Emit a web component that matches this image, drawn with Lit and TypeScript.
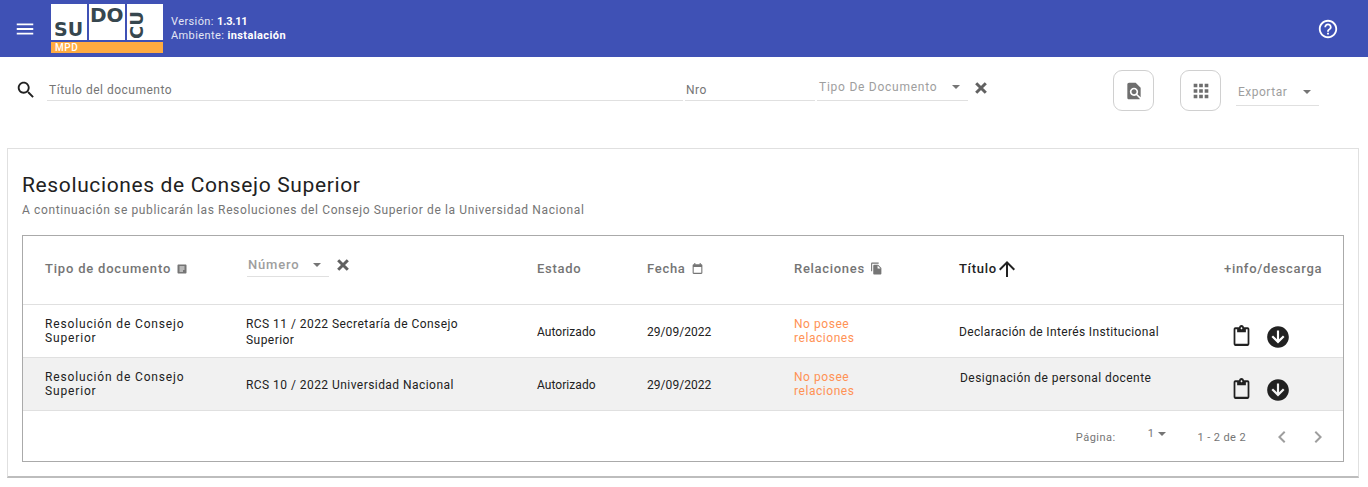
import { LitElement, html, css, svg } from "lit";
import { customElement } from "lit/decorators.js";

const icon = (size: number, d: string, cls = "") =>
  html`<svg class=${cls} width=${size} height=${size} viewBox="0 0 24 24" fill="currentColor">${svg`<path d=${d}></path>`}</svg>`;

const timesIcon = (cls: string) =>
  html`<svg class=${cls} width="16" height="16" viewBox="0 0 16 16" fill="none" stroke="currentColor" stroke-width="3">${svg`<path d="M3.2 3.2L12.8 12.8M12.8 3.2L3.2 12.8"></path>`}</svg>`;

const P = {
  menu: "M3 18h18v-2H3v2zm0-5h18v-2H3v2zm0-7v2h18V6H3z",
  help: "M11 18h2v-2h-2v2zm1-16C6.48 2 2 6.48 2 12s4.48 10 10 10 10-4.48 10-10S17.52 2 12 2zm0 18c-4.41 0-8-3.59-8-8s3.59-8 8-8 8 3.59 8 8-3.59 8-8 8zm0-14c-2.21 0-4 1.79-4 4h2c0-1.1.9-2 2-2s2 .9 2 2c0 2-3 1.75-3 5h2c0-2.25 3-2.5 3-5 0-2.21-1.79-4-4-4z",
  search: "M15.5 14h-.79l-.28-.27C15.41 12.59 16 11.11 16 9.5 16 5.91 13.09 3 9.5 3S3 5.91 3 9.5 5.91 16 9.5 16c1.61 0 3.09-.59 4.23-1.57l.27.28v.79l5 4.99L20.49 19l-4.99-5zm-6 0C7.01 14 5 11.99 5 9.5S7.01 5 9.5 5 14 7.01 14 9.5 11.99 14 9.5 14z",
  findDoc: "M20 19.59V8l-6-6H6c-1.1 0-1.99.9-1.99 2L4 20c0 1.1.89 2 1.99 2H18c.45 0 .85-.15 1.19-.4l-4.43-4.43c-.8.52-1.74.83-2.76.83-2.76 0-5-2.24-5-5s2.24-5 5-5 5 2.24 5 5c0 1.02-.31 1.96-.83 2.75L20 19.59zM9 13c0 1.66 1.34 3 3 3s3-1.34 3-3-1.34-3-3-3-3 1.34-3 3z",
  apps: "M4 8h4V4H4v4zm6 12h4v-4h-4v4zm-6 0h4v-4H4v4zm0-6h4v-4H4v4zm6 0h4v-4h-4v4zm6-10v4h4V4h-4zm-6 4h4V4h-4v4zm6 6h4v-4h-4v4zm0 6h4v-4h-4v4z",
  article: "M19 3H5c-1.1 0-2 .9-2 2v14c0 1.1.9 2 2 2h14c1.1 0 2-.9 2-2V5c0-1.1-.9-2-2-2zm-5 14H7v-2h7v2zm3-4H7v-2h10v2zm0-4H7V7h10v2z",
  calendar: "M19 4h-1V2h-2v2H8V2H6v2H5c-1.11 0-2 .9-2 2v14c0 1.1.89 2 2 2h14c1.1 0 2-.9 2-2V6c0-1.1-.9-2-2-2zm0 16H5V9h14v11z",
  copy: "M16 1H4c-1.1 0-2 .9-2 2v14h2V3h12V1zm-1 4l6 6v10c0 1.1-.9 2-2 2H7.99C6.89 23 6 22.1 6 21l.01-14c0-1.1.89-2 1.99-2h7zm-1 7h5.5L14 6.5V12z",
  up: "M4 12l1.41 1.41L11 7.83V20h2V7.83l5.58 5.59L20 12l-8-8-8 8z",
  clip: "M19 3h-4.18C14.4 1.84 13.3 1 12 1s-2.4.84-2.82 2H5c-1.1 0-2 .9-2 2v14c0 1.1.9 2 2 2h14c1.1 0 2-.9 2-2V5c0-1.1-.9-2-2-2zm-7 0c.55 0 1 .45 1 1s-.45 1-1 1-1-.45-1-1 .45-1 1-1zm7 16H5V5h2v3h10V5h2v14z",
  down: "M12 2C6.48 2 2 6.48 2 12s4.48 10 10 10 10-4.48 10-10S17.52 2 12 2zm0 16l-6-6 1.41-1.41L11 14.17V6h2v8.17l3.59-3.58L18 12l-6 6z",
  left: "M15.41 7.41L14 6l-6 6 6 6 1.41-1.41L10.83 12z",
  right: "M10 6L8.59 7.41 13.17 12l-4.58 4.59L10 18l6-6z",
};

@customElement("app-root")
export class AppRoot extends LitElement {
  static styles = css`
    :host { display: block; width: 1368px; height: 487px; overflow: hidden; background: #fff; font-family: Roboto, "Liberation Sans", sans-serif; font-size: 12px; letter-spacing: 0.5px; color: #212121; }
    svg { display: block; flex: none; }
    .top { height: 57px; background: #3f51b5; color: #fff; display: flex; align-items: center; padding: 0 29px 0 14px; }
    .menu { margin-right: 15px; }
    .logo { width: 112px; height: 49px; display: grid; grid-template-columns: 36px 36px 36px; grid-template-rows: 36px 11px; column-gap: 2px; row-gap: 2px; font-family: "DejaVu Sans", sans-serif; font-weight: 700; color: #37474f; letter-spacing: 0; }
    .tile { background: #fff; display: flex; overflow: hidden; }
    .su { align-items: flex-end; padding: 0 0 3px 3px; font-size: 19px; line-height: 16px; }
    .do { align-items: flex-start; padding: 2px 0 0 1px; font-size: 20px; line-height: 18px; }
    .cu { align-items: center; padding-left: 1px; }
    .cu span { display: block; transform: rotate(-90deg); font-size: 18px; line-height: 18px; width: 18px; white-space: nowrap; text-indent: -8px; }
    .mpd { grid-column: 1 / 4; background: #ffab40; color: #fff; font: 500 10px/11px Roboto, sans-serif; letter-spacing: .6px; padding-left: 4px; }
    .ver { margin-left: 8px; font-size: 11px; line-height: 14px; color: #e3e6f4; letter-spacing: .4px; }
    .ver b { color: #fff; font-weight: 700; }
    .ver .n { letter-spacing: -.2px; }
    .spacer { flex: 1; }
    .filters { height: 91px; display: flex; align-items: flex-start; padding-left: 15px; color: #757575; }
    .fsearch { margin: 22px 10px 0 0; color: #212121; }
    .field { height: 20px; border-bottom: 1px solid #e0e0e0; font-size: 12px; line-height: 20px; margin-top: 23px; box-sizing: content-box; }
    .ftitle { width: 634px; padding-left: 2px; }
    .fnro { width: 129px; padding-left: 1px; margin-left: 2px; }
    .select { display: flex; justify-content: space-between; align-items: center; color: #9e9e9e; }
    .ftipo { width: 151px; margin-left: 2px; padding: 0 8px 6px 2px; box-sizing: border-box; height: 21px; line-height: 14px; letter-spacing: .75px; }
    .caret { width: 0; height: 0; border: 4.5px solid transparent; border-top-color: #757575; border-bottom: 0; flex: none; }
    .x { color: #616161; }
    .fx { margin: 23px 0 0 5px; }
    .btn { width: 41px; height: 41px; box-sizing: border-box; border: 1px solid #d0d0d0; border-radius: 9px; display: flex; align-items: center; justify-content: center; color: #6e6e6e; margin-top: 13px; }
    .b1 { margin-left: 124px; }
    .b2 { margin-left: 26px; }
    .fexp { width: 83px; margin: 25px 0 0 15px; padding: 0 8px 4px 2px; box-sizing: border-box; height: 24px; line-height: 18px; }
    .card { margin: 0 0 0 7px; width: 1352px; height: 330px; box-sizing: border-box; border: 1px solid #e0e0e0; border-bottom: 2px solid #bdbdbd; padding: 24px 14px 0; }
    h1 { margin: 0; font-size: 21px; font-weight: 400; line-height: 24px; letter-spacing: .63px; color: #212121; }
    .sub { color: #757575; line-height: 16px; margin-top: 5px; margin-bottom: 17px; letter-spacing: .62px; }
    .table { height: 227px; box-sizing: border-box; border: 1px solid #aaa; }
    .row { display: grid; grid-template-columns: 201px 291px 110px 147px 165px 265px 1fr; padding-left: 22px; align-items: center; border-bottom: 1px solid #e0e0e0; }
    .head { height: 69px; font-weight: 500; font-size: 13px; color: #757575; box-sizing: border-box; letter-spacing: .7px; padding-bottom: 3px; }
    .body { height: 53px; box-sizing: border-box; line-height: 14px; padding-top: 2px; }
    .alt { background: #f1f1f1; }
    .th { display: flex; align-items: center; gap: 5px; }
    .tipo { letter-spacing: .8px; }
    .active { color: #212121; gap: 1px; }
    .arrow { margin-left: -3px; }
    .num { display: flex; align-items: flex-start; margin: -6px 0 0 1px; }
    .fnum { width: 82px; height: 22px; margin: 0; padding: 0 8px 0 1px; box-sizing: border-box; font-weight: 500; font-size: 13px; line-height: 16px; border-bottom: 1px solid #e0e0e0; letter-spacing: .8px; }
    .nx { margin: 2px 0 0 6px; }
    .ctipo { max-width: 160px; letter-spacing: .85px; margin-top: -2px; }
    .cnum { max-width: 225px; letter-spacing: .45px; line-height: 16px; }
    .cest, .cfec { letter-spacing: .05px; }
    .rel { color: #ff9255; letter-spacing: .55px; margin-top: -2px; }
    .ctit { letter-spacing: .35px; }
    .t2 { align-self: start; margin-top: 11px; margin-left: 1px; letter-spacing: .45px; }
    .last { padding-left: 0; }
    .acts { display: flex; align-items: center; gap: 13px; color: #212121; margin: 9px 0 0 7px; }
    .clip { width: 21px; height: 25px; }
    .pager { display: flex; align-items: center; height: 50px; padding: 2px 13px 0 0; box-sizing: border-box; color: #757575; font-size: 11px; }
    .pl { margin-left: auto; }
    .pn { margin-left: 32px; display: flex; align-items: center; gap: 4px; margin-top: -7px; }
    .pr { margin-left: 31px; letter-spacing: .4px; }
    .pg { margin-left: 24px; color: #9e9e9e; display: flex; gap: 12px; }
  `;

  private row(num: string, titulo: string, alt: boolean) {
    return html`<div class="row body ${alt ? "alt" : ""}">
      <div class="ctipo">Resolución de Consejo Superior</div>
      <div class="cnum">${num}</div>
      <div class="cest">Autorizado</div>
      <div class="cfec">29/09/2022</div>
      <div class="rel">No posee<br />relaciones</div>
      <div class=${alt ? "t2" : "ctit"}>${titulo}</div>
      <div class="acts">
        <svg class="clip" viewBox="0 0 24 24" preserveAspectRatio="none" fill="currentColor">${svg`<path d=${P.clip}></path>`}</svg>
        ${icon(26, P.down)}
      </div>
    </div>`;
  }

  render() {
    return html`
      <header class="top">
        ${icon(22, P.menu, "menu")}
        <div class="logo">
          <div class="tile su">SU</div>
          <div class="tile do">DO</div>
          <div class="tile cu"><span>CU</span></div>
          <div class="mpd">MPD</div>
        </div>
        <div class="ver">Versión: <b class="n">1.3.11</b><br />Ambiente: <b>instalación</b></div>
        <div class="spacer"></div>
        ${icon(22, P.help)}
      </header>
      <section class="filters">
        ${icon(22, P.search, "fsearch")}
        <div class="field ftitle">Título del documento</div>
        <div class="field fnro">Nro</div>
        <div class="field select ftipo"><span>Tipo De Documento</span><i class="caret"></i></div>
        ${timesIcon("x fx")}
        <div class="btn b1">${icon(20, P.findDoc)}</div>
        <div class="btn b2">${icon(22, P.apps)}</div>
        <div class="field select fexp"><span>Exportar</span><i class="caret"></i></div>
      </section>
      <main class="card">
        <h1>Resoluciones de Consejo Superior</h1>
        <div class="sub">A continuación se publicarán las Resoluciones del Consejo Superior de la Universidad Nacional</div>
        <div class="table">
          <div class="row head">
            <div class="th tipo">Tipo de documento ${icon(12, P.article)}</div>
            <div class="num">
              <div class="field select fnum"><span>Número</span><i class="caret"></i></div>
              ${timesIcon("x nx")}
            </div>
            <div class="th">Estado</div>
            <div class="th">Fecha ${icon(13, P.calendar)}</div>
            <div class="th">Relaciones ${icon(13, P.copy)}</div>
            <div class="th active">Título ${icon(24, P.up, "arrow")}</div>
            <div class="th last">+info/descarga</div>
          </div>
          ${this.row("RCS 11 / 2022 Secretaría de Consejo Superior", "Declaración de Interés Institucional", false)}
          ${this.row("RCS 10 / 2022 Universidad Nacional", "Designación de personal docente", true)}
          <div class="pager">
            <span class="pl">Página:</span>
            <span class="pn">1 <i class="caret"></i></span>
            <span class="pr">1 - 2 de 2</span>
            <span class="pg">${icon(24, P.left)}${icon(24, P.right)}</span>
          </div>
        </div>
      </main>
    `;
  }
}
